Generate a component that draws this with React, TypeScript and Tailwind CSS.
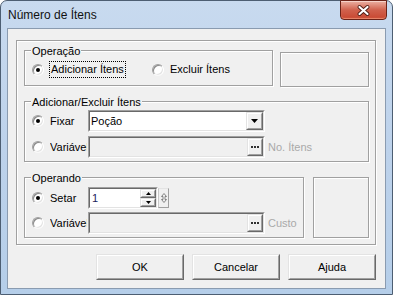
import type { ReactNode } from "react";

// classic 3D edges
function Sunken({ className, children }: { className: string; children?: ReactNode }) {
  return (
    <div className={`border border-t-[#a0a0a0] border-l-[#a0a0a0] border-r-white border-b-white ${className}`}>
      <div className="flex h-full w-full border border-t-[#696969] border-l-[#696969] border-r-[#e3e3e3] border-b-[#e3e3e3]">
        {children}
      </div>
    </div>
  );
}

function Raised({ className, children }: { className: string; children?: ReactNode }) {
  return (
    <div className={`border border-t-[#e3e3e3] border-l-[#e3e3e3] border-r-[#696969] border-b-[#696969] bg-[#f0f0f0] ${className}`}>
      <div className="flex h-full w-full items-center justify-center border border-t-white border-l-white border-r-[#a0a0a0] border-b-[#a0a0a0]">
        {children}
      </div>
    </div>
  );
}

function Radio({ checked }: { checked?: boolean }) {
  return (
    <span className="flex h-[12px] w-[12px] shrink-0 items-center justify-center rounded-full border border-t-[#a0a0a0] border-l-[#a0a0a0] border-r-white border-b-[#f8f8f8] bg-white shadow-[inset_1px_1px_0_#8a8a8a,inset_-1px_-1px_0_#e3e3e3]">
      {checked && <span className="h-[4px] w-[4px] rounded-full bg-black" />}
    </span>
  );
}

function GroupBox({ title, className, children }: { title: string; className: string; children?: ReactNode }) {
  return (
    <div className={`relative border border-[#a0a0a0] shadow-[inset_1px_1px_0_#fff,1px_1px_0_#fff] ${className}`}>
      <span className="absolute left-[6px] top-[-6px] bg-[#f0f0f0] px-px">{title}</span>
      {children}
    </div>
  );
}

function Ellipsis() {
  return (
    <Raised className="h-full w-[16px] shrink-0">
      <span className="flex gap-px">
        <span className="h-[2px] w-[2px] bg-[#303030]" />
        <span className="h-[2px] w-[2px] bg-[#303030]" />
        <span className="h-[2px] w-[2px] bg-[#303030]" />
      </span>
    </Raised>
  );
}

function Arrow({ up }: { up?: boolean }) {
  return (
    <svg width="5" height="3" viewBox="0 0 5 3">
      <path d={up ? "M0 3 L2.5 0 L5 3 Z" : "M0 0 L5 0 L2.5 3 Z"} fill="#000" />
    </svg>
  );
}

function LabelCell({ text }: { text: string }) {
  return <span className="ml-[6px] w-[37px] shrink-0 overflow-hidden whitespace-nowrap">{text}</span>;
}

function DisabledField({ hint }: { hint: string }) {
  return (
    <>
      <Sunken className="ml-px h-[22px] w-[177px] bg-[#f0f0f0]">
        <div className="flex-1" />
        <Ellipsis />
      </Sunken>
      <span className="ml-[3px] text-[#a9a9a9]">{hint}</span>
    </>
  );
}

export default function App() {
  return (
    <div className="h-[295px] w-[393px] overflow-hidden bg-white font-['Liberation_Sans',Arial,sans-serif] text-[11px] leading-[13px] text-black">
      <div className="flex h-full flex-col rounded-t-[7px] border border-[#4d5e72] bg-linear-to-b from-[#c8daef] via-[#bdd2eb] to-[#b5cee9]">
        {/* title bar */}
        <div className="flex h-[27px] shrink-0">
          <span className="pl-[7px] pt-[7px] text-[12px] leading-[15px] text-[#111]">Número de Ítens</span>
          <div className="ml-auto mr-[5px] -mt-px flex h-[20px] w-[47px] items-center justify-center rounded-b-[4px] border border-[#6b2217] bg-linear-to-b from-[#eab0a3] via-[#d0614d] to-[#c8452f] shadow-[inset_0_1px_0_#f6d2c9,inset_0_-1px_1px_#e98a6f]">
            <svg width="13" height="11" viewBox="0 0 13 11">
              <path d="M2.5 2 L10.5 9 M10.5 2 L2.5 9" stroke="#4a1a12" strokeWidth="3.8" strokeLinecap="round" />
              <path d="M2.5 2 L10.5 9 M10.5 2 L2.5 9" stroke="#fff" strokeWidth="2.2" strokeLinecap="round" />
            </svg>
          </div>
        </div>

        {/* client area */}
        <div className="ml-[6px] flex h-[261px] w-[379px] flex-col border border-[#8a9bb0] bg-[#f0f0f0]">
          <div className="ml-[8px] mt-[11px] flex h-[205px] w-[360px] flex-col border border-[#a0a0a0] pl-[7px] pt-[9px] shadow-[inset_1px_1px_0_#fff,1px_1px_0_#fff]">
            {/* row 1 */}
            <div className="flex items-start">
              <GroupBox title="Operação" className="h-[36px] w-[249px] pl-[7px] pt-[10px]">
                <div className="flex h-[17px] items-center">
                  <div className="flex w-[120px] items-center">
                    <Radio checked />
                    <span className="ml-[5px] flex h-[17px] items-center border border-dotted border-black px-px">Adicionar Ítens</span>
                  </div>
                  <Radio />
                  <span className="ml-[6px]">Excluir Ítens</span>
                </div>
              </GroupBox>
              <div className="ml-[7px] mt-[2px] h-[35px] w-[89px] border border-[#a0a0a0] shadow-[inset_1px_1px_0_#fff,1px_1px_0_#fff]" />
            </div>

            {/* row 2 */}
            <GroupBox title="Adicionar/Excluir Ítens" className="mt-[14px] h-[61px] w-[345px] pl-[7px] pt-[8px]">
              <div className="flex h-[22px] items-center">
                <Radio checked />
                <LabelCell text="Fixar" />
                <Sunken className="ml-px h-[22px] w-[177px] bg-white">
                  <span className="flex flex-1 items-center pl-px">Poção</span>
                  <Raised className="h-full w-[17px] shrink-0">
                    <svg width="7" height="4" viewBox="0 0 7 4">
                      <path d="M0 0 L7 0 L3.5 4 Z" fill="#000" />
                    </svg>
                  </Raised>
                </Sunken>
              </div>
              <div className="mt-[4px] flex h-[22px] items-center">
                <Radio />
                <LabelCell text="Variável" />
                <DisabledField hint="No. Ítens" />
              </div>
            </GroupBox>

            {/* row 3 */}
            <div className="mt-[15px] flex">
              <GroupBox title="Operando" className="h-[61px] w-[280px] pl-[7px] pt-[9px]">
                <div className="flex h-[22px] items-center">
                  <Radio checked />
                  <LabelCell text="Setar" />
                  <Sunken className="ml-px h-[22px] w-[70px] bg-white">
                    <span className="flex flex-1 items-center pl-[2px] text-[#1c1c5c]">1</span>
                    <div className="flex w-[16px] flex-col">
                      <Raised className="h-[9px] w-full">
                        <Arrow up />
                      </Raised>
                      <Raised className="h-[9px] w-full">
                        <Arrow />
                      </Raised>
                    </div>
                  </Sunken>
                  <div className="flex h-[20px] w-[11px] items-center justify-center border border-t-[#e3e3e3] border-l-[#c8c8c8] border-r-[#a0a0a0] border-b-[#a0a0a0]">
                    <svg width="6" height="10" viewBox="0 0 6 10">
                      <path d="M3 0.5 L5.5 3.5 H4 V6.5 H5.5 L3 9.5 L0.5 6.5 H2 V3.5 H0.5 Z" fill="none" stroke="#6a6a6a" strokeWidth="0.8" />
                    </svg>
                  </div>
                </div>
                <div className="mt-[3px] flex h-[22px] items-center">
                  <Radio />
                  <LabelCell text="Variável" />
                  <DisabledField hint="Custo" />
                </div>
              </GroupBox>
              <div className="ml-[9px] h-[61px] w-[56px] border border-[#a0a0a0] shadow-[inset_1px_1px_0_#fff,1px_1px_0_#fff]" />
            </div>
          </div>

          {/* buttons */}
          <div className="mt-[9px] flex justify-end gap-[8px] pr-[9px]">
            {["OK", "Cancelar", "Ajuda"].map((label) => (
              <Raised key={label} className="h-[26px] w-[88px]">
                {label}
              </Raised>
            ))}
          </div>
        </div>
      </div>
    </div>
  );
}
